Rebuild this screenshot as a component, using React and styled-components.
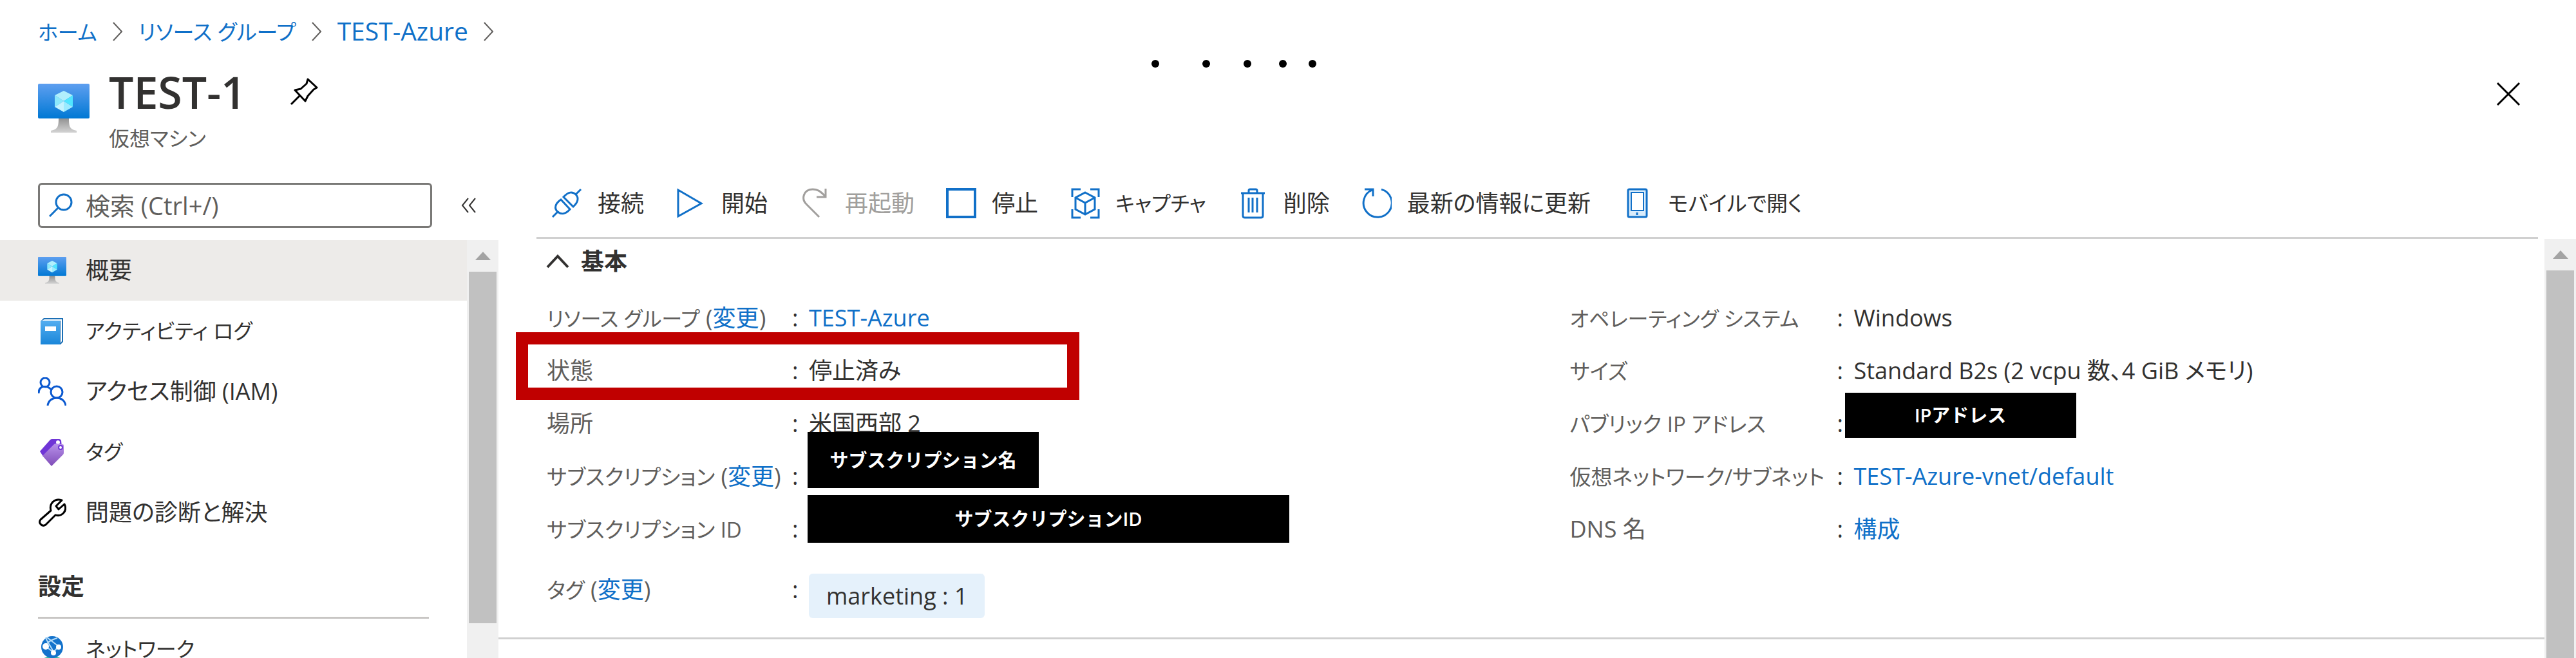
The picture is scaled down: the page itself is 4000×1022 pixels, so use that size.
import React from "react";
import styled, { createGlobalStyle, ThemeProvider } from "styled-components";

const theme = {
  link: "#0f70c8",
  icon: "#1170c8",
  text: "#323130",
  muted: "#605e5c",
  disabled: "#a19f9d",
  line: "#d0d0d0",
  hover: "#edebe9",
  size: { mask: 29, small: 32, kana: 33, body: 36, input: 38, large: 39, title: 68 },
};

const GlobalStyle = createGlobalStyle`
  * {
    box-sizing: border-box;
  }
  body {
    margin: 0;
    background: #fff;
    overflow: hidden;
    color: ${theme.text};
    font-family: "Open Sans", "Noto Sans CJK JP", sans-serif;
    font-size: ${theme.size.body}px;
    line-height: 50px;
    font-feature-settings: "palt";
  }
  button {
    padding: 0;
    border: 0;
    background: none;
    color: inherit;
    font: inherit;
    font-feature-settings: inherit;
    cursor: pointer;
  }
  svg {
    display: block;
    flex: none;
    fill: none;
  }
`;

const Page = styled.div`
  display: flex;
  flex-direction: column;
  height: 100vh;
  position: relative;
`;

const Link = styled.a`
  color: ${({ theme }) => theme.link};
  text-decoration: none;
`;

const Text = styled.span`
  font-size: ${({ theme, $size = "body" }) => theme.size[$size]}px;
  white-space: nowrap;
`;

/* ---------- header ---------- */

const Breadcrumb = styled.nav`
  display: flex;
  align-items: center;
  gap: 24px;
  height: 74px;
  padding: 24px 59px 0;
`;

const Header = styled.header`
  display: flex;
  align-items: center;
  gap: 30px;
  padding: 34px 86px 29px 59px;
`;

const TitleBlock = styled.div`
  flex: 1;
  display: flex;
  flex-direction: column;
  gap: 17px;
`;

const TitleRow = styled.div`
  display: flex;
  align-items: center;
  gap: 68px;
`;

const Title = styled.h1`
  margin: 0;
  font-size: ${({ theme }) => theme.size.title}px;
  font-weight: 600;
  line-height: 70px;
`;

const Subtitle = styled.div`
  color: ${({ theme }) => theme.muted};
  font-size: ${({ theme }) => theme.size.small}px;
  line-height: 40px;
`;

const CloseButton = styled.button`
  align-self: flex-start;
  height: 76px;
`;

const Progress = styled.div`
  position: absolute;
  top: 93px;
  left: 1788px;
`;

/* ---------- layout ---------- */

const Body = styled.div`
  flex: 1;
  min-height: 0;
  display: grid;
  grid-template-columns: 774px 1fr;
`;

const Column = styled.div`
  display: flex;
  flex-direction: column;
  min-width: 0;
  min-height: 0;
`;

const Scrollable = styled.div`
  flex: 1;
  min-height: 0;
  display: flex;
`;

const ScrollContent = styled.div`
  flex: 1;
  min-width: 0;
  overflow: hidden;
`;

const ScrollTrack = styled.div`
  width: 49px;
  display: flex;
  flex-direction: column;
  background: #f0f0f0;
`;

const ScrollArrow = styled.button`
  height: 49px;
  display: grid;
  place-items: center;
`;

const ScrollRail = styled.div`
  flex: 1;
  padding: 0 3px;
`;

const ScrollThumb = styled.div`
  height: ${({ $length }) => $length}%;
  background: #c1c1c1;
`;

/* ---------- sidebar ---------- */

const SearchRow = styled.div`
  display: flex;
  align-items: center;
  gap: 45px;
  height: 109px;
  padding-left: 59px;
`;

const SearchBox = styled.label`
  width: 612px;
  height: 70px;
  display: flex;
  align-items: center;
  gap: 20px;
  padding: 0 14px;
  border: 3px solid #7a7977;
  border-radius: 6px;
`;

const SearchInput = styled.input`
  flex: 1;
  min-width: 0;
  padding: 0;
  border: 0;
  outline: 0;
  background: none;
  color: ${({ theme }) => theme.text};
  font: inherit;
  font-feature-settings: inherit;
  font-size: ${({ theme }) => theme.size.input}px;

  &::placeholder {
    color: ${({ theme }) => theme.muted};
    opacity: 1;
  }
`;

const NavItem = styled.a`
  display: flex;
  align-items: center;
  gap: 30px;
  height: 94px;
  padding-left: 59px;
  color: inherit;
  text-decoration: none;
  background: ${({ theme, $active }) => ($active ? theme.hover : "transparent")};
`;

const NavHeading = styled.h2`
  margin: 0 59px;
  padding: 43px 0 22px;
  border-bottom: 3px solid #c8c6c4;
  font-size: ${({ theme }) => theme.size.body}px;
  font-weight: 600;
`;

/* ---------- main ---------- */

const Toolbar = styled.div`
  display: flex;
  align-items: center;
  gap: 48px;
  height: 107px;
  margin: 0 59px;
  padding-left: 23px;
  border-bottom: 3px solid ${({ theme }) => theme.line};
`;

const ToolButton = styled.button`
  display: flex;
  align-items: center;
  gap: 24px;
  color: ${({ theme }) => theme.text};

  svg {
    color: ${({ theme }) => theme.icon};
  }
  &:disabled,
  &:disabled svg {
    color: ${({ theme }) => theme.disabled};
  }
`;

const Essentials = styled.section`
  border-bottom: 3px solid ${({ theme }) => theme.line};
`;

const SectionToggle = styled.button`
  display: flex;
  align-items: center;
  gap: 18px;
  height: 70px;
  margin: 0 0 12px 74px;
  font-weight: 600;
`;

const Fields = styled.div`
  display: grid;
  grid-template-columns: 1fr 1fr;
`;

const FieldList = styled.dl`
  margin: 0;
  padding-left: 75px;
`;

const Field = styled.div`
  position: relative;
  display: grid;
  grid-template-columns: ${({ $wide }) => ($wide ? 415 : 381)}px 26px 1fr;
  align-items: ${({ $tall }) => ($tall ? "start" : "center")};
  min-height: 82px;
  padding: ${({ $tall }) => ($tall ? "28px 0 30px" : "0")};
`;

const Label = styled.dt`
  color: ${({ theme }) => theme.muted};
  white-space: nowrap;
`;

const Value = styled.dd`
  margin: 0;
  align-self: stretch;
  display: flex;
  align-items: center;
  position: relative;
  white-space: nowrap;
`;

const Chip = styled.span`
  height: 69px;
  padding: 0 27px;
  border-radius: 6px;
  background: #e5f1fb;
  line-height: 69px;
`;

const Mask = styled.span`
  position: absolute;
  top: ${({ $top }) => $top}px;
  left: ${({ $left = -2 }) => $left}px;
  width: ${({ $width }) => $width}px;
  height: ${({ $height }) => $height}px;
  display: grid;
  place-items: center;
  z-index: 1;
  background: #000;
  color: #fff;
  font-size: ${({ theme }) => theme.size.mask}px;
  font-weight: 600;
  font-feature-settings: normal;
`;

const Highlight = styled.span`
  position: absolute;
  top: -19px;
  left: -48px;
  width: 875px;
  height: 105px;
  border: 19px solid #c00000;
`;

/* ---------- icons ---------- */

const VmIcon = ({ id, width = 44, height = 42 }) => (
  <svg width={width} height={height} viewBox="0 0 80 76" preserveAspectRatio="xMidYMin meet">
    <defs>
      <linearGradient id={id + "s"} x1="0" y1="0" x2="0" y2="1">
        <stop offset="0" stopColor="#5e9ff0" />
        <stop offset="1" stopColor="#0078d4" />
      </linearGradient>
      <linearGradient id={id + "b"} x1="0" y1="0" x2="0" y2="1">
        <stop offset="0" stopColor="#8f8f8f" />
        <stop offset="1" stopColor="#d4d4d4" />
      </linearGradient>
    </defs>
    <path d="M32 53h16c0 13 1 18 12 20v3H20v-3c11-2 12-7 12-20z" fill={`url(#${id}b)`} />
    <rect width="80" height="54" rx="2" fill={`url(#${id}s)`} />
    <path d="M26 18 40 11l14 7-14 9z" fill="#b0effc" />
    <path d="M54 18v18l-14-9z" fill="#50e6ff" />
    <path d="M26 18v18l14-9z" fill="#8be8fb" />
    <path d="M26 36l14-9v17z" fill="#c3f3ff" />
    <path d="M54 36l-14-9v17z" fill="#9cebff" />
  </svg>
);

const BookIcon = () => (
  <svg width="44" height="44" viewBox="0 0 44 44">
    <defs>
      <linearGradient id="book" x1="0" y1="0" x2="0" y2="1">
        <stop offset="0" stopColor="#54aef0" />
        <stop offset="1" stopColor="#1a86d9" />
      </linearGradient>
    </defs>
    <path d="M4 7 9 2h30v37l-4 4H4z" fill="#1b6fb5" />
    <path d="M6 6 10 4h27v34l-2 3V6z" fill="#fff" />
    <path d="M4 6h30v37H4z" fill="url(#book)" />
    <path d="M11 15h17v7H11z" fill="#fff" />
  </svg>
);

const PeopleIcon = () => (
  <svg width="44" height="44" viewBox="0 0 44 44" stroke="#0b59d0" strokeWidth="3">
    <circle cx="11" cy="8" r="7" />
    <circle cx="29" cy="23" r="9" />
    <path d="M1 25c0-14 15-12 19-6M15 44c2-16 26-16 28 0" />
  </svg>
);

const TagIcon = () => (
  <svg width="44" height="44" viewBox="0 0 44 44">
    <defs>
      <linearGradient id="tag" x1="0" y1="0" x2="0" y2="1">
        <stop offset="0" stopColor="#b892ea" />
        <stop offset="1" stopColor="#7f4cb8" />
      </linearGradient>
    </defs>
    <path d="M3 21 19 3q1-1 3-1h11q2 0 3 2l1 10L8 29z" fill="#6f35d6" />
    <circle cx="31" cy="7" r="3" fill="#fff" />
    <path d="M7 28 25 10q1-1 3-1l10 1q2 0 2 2v11q0 2-1 3L21 44z" fill="url(#tag)" />
    <circle cx="35" cy="15" r="3" fill="#fff" stroke="#6f35d6" strokeWidth="2" />
  </svg>
);

const WrenchIcon = () => (
  <svg width="44" height="44" viewBox="0 0 44 44" stroke="#000" strokeWidth="3" strokeLinejoin="round">
    <path d="M4 33 20 19C17 8 26-1 37 3l-9 9 4 5 9-8c5 10-3 20-14 17L12 41c-6 4-12-3-8-8z" />
  </svg>
);

const GlobeIcon = () => (
  <svg width="44" height="44" viewBox="0 0 44 44">
    <path d="M2 44c3-14 37-14 40 0z" fill="#35b9a0" />
    <circle cx="22" cy="19" r="17" fill="#1473cc" />
    <g stroke="#b5dcf8" strokeWidth="2">
      <path d="M14 4 32 18M30 5C20 8 13 12 12 18l12 9 8-9M12 4c2 8 9 14 12 23" />
    </g>
    <g fill="#fff">
      <circle cx="12" cy="18" r="5" />
      <circle cx="32" cy="19" r="4" />
      <circle cx="24" cy="28" r="4" />
    </g>
  </svg>
);

const ToolIcon = ({ children, strokeWidth = 3 }) => (
  <svg width="48" height="48" viewBox="0 0 48 48" stroke="currentColor" strokeWidth={strokeWidth}>
    {children}
  </svg>
);

const icons = {
  connect: (
    <ToolIcon>
      <path d="M2 45l9-9M38 10l8-8" />
      <path d="M15 18 29 33c-6 7-13 9-19 4s-4-13 5-19z" />
      <path d="M19 14 34 29c8-7 9-14 4-19s-12-4-19 4z" />
    </ToolIcon>
  ),
  start: (
    <ToolIcon>
      <path d="M5 3v41l36-20z" />
    </ToolIcon>
  ),
  restart: (
    <ToolIcon>
      <path d="M32 45 13 26C3 17 8 2 22 2c9 0 12 4 20 11M42 1v13H28" />
    </ToolIcon>
  ),
  stop: (
    <ToolIcon strokeWidth={4}>
      <rect x="3" y="2" width="43" height="43" />
    </ToolIcon>
  ),
  capture: (
    <ToolIcon>
      <path d="M18 2H5v12M33 2h13v12M18 46H5V33M33 46h13V33" />
      <path d="M25 7l15 8v18l-15 8-15-8V15zM10 15l15 8 15-8M25 23v18" />
    </ToolIcon>
  ),
  trash: (
    <ToolIcon>
      <path d="M6 8h37M18 8V4q0-2 2-2h9q2 0 2 2v4M9 8v35q0 3 3 3h25q3 0 3-3V8M18 15v23M24 15v23M31 15v23" />
    </ToolIcon>
  ),
  refresh: (
    <ToolIcon>
      <path d="M32 2.1A22 22 0 1 1 18 2.9M6 2h13v11" />
    </ToolIcon>
  ),
  mobile: (
    <ToolIcon>
      <rect x="10" y="2" width="29" height="43" rx="2" fill="#d9ecfb" />
      <rect x="15" y="7" width="19" height="28" fill="#fff" strokeWidth="2" />
      <path d="M24 38v4" />
    </ToolIcon>
  ),
};

const PinIcon = () => (
  <svg width="44" height="44" viewBox="0 0 44 44" stroke="#000" strokeWidth="3" strokeLinejoin="round">
    <path d="M2 41 15 28M28 2l14 13-5 3-9 10-4 8L8 19l9-2 9-8z" />
  </svg>
);

const BreadcrumbChevron = () => (
  <svg width="16" height="30" viewBox="0 0 16 30" stroke="#605e5c" strokeWidth="2">
    <path d="M1 1l13 14L1 29" />
  </svg>
);

const SearchIcon = () => (
  <svg width="37" height="37" viewBox="0 0 37 37" stroke={theme.icon} strokeWidth="3">
    <circle cx="23" cy="14" r="12" />
    <path d="M1 36l14-14" />
  </svg>
);

/* ---------- data ---------- */

const navItems = [
  { label: "概要", icon: <VmIcon id="nav" />, active: true },
  { label: "アクティビティ ログ", icon: <BookIcon />, size: "small" },
  { label: "アクセス制御 (IAM)", icon: <PeopleIcon /> },
  { label: "タグ", icon: <TagIcon />, size: "small" },
  { label: "問題の診断と解決", icon: <WrenchIcon /> },
];

const tools = [
  { label: "接続", icon: "connect" },
  { label: "開始", icon: "start" },
  { label: "再起動", icon: "restart", disabled: true },
  { label: "停止", icon: "stop" },
  { label: "キャプチャ", icon: "capture", size: "small" },
  { label: "削除", icon: "trash" },
  { label: "最新の情報に更新", icon: "refresh" },
  { label: "モバイルで開く", icon: "mobile", size: "kana" },
];

const leftFields = [
  { label: "リソース グループ", size: "small", change: true, value: <Link href="#group">TEST-Azure</Link> },
  { label: "状態", value: "停止済み", highlight: true },
  { label: "場所", value: "米国西部 2" },
  {
    label: "サブスクリプション",
    size: "kana",
    change: true,
    value: <Mask $top={-28} $width={359} $height={87}>サブスクリプション名</Mask>,
  },
  {
    label: "サブスクリプション ID",
    size: "kana",
    value: <Mask $top={-12} $width={748} $height={74}>サブスクリプションID</Mask>,
  },
  { label: "タグ", size: "kana", change: true, tall: true, value: <Chip>marketing : 1</Chip> },
];

const rightFields = [
  { label: "オペレーティング システム", size: "small", value: "Windows" },
  { label: "サイズ", size: "kana", value: "Standard B2s (2 vcpu 数、4 GiB メモリ)" },
  {
    label: "パブリック IP アドレス",
    size: "kana",
    value: <Mask $top={-7} $left={-14} $width={359} $height={70}>IPアドレス</Mask>,
  },
  { label: "仮想ネットワーク/サブネット", size: "kana", value: <Link href="#vnet">TEST-Azure-vnet/default</Link> },
  { label: "DNS 名", value: <Link href="#dns">構成</Link> },
];

const renderFields = (fields, wide) =>
  fields.map(({ label, size, change, value, highlight, tall }) => (
    <Field key={label} $wide={wide} $tall={tall}>
      <Label>
        <Text $size={size}>{label}</Text>
        {change && (
          <>
            {" "}(<Link href="#change">変更</Link>)
          </>
        )}
      </Label>
      <span aria-hidden="true">:</span>
      <Value>{value}</Value>
      {highlight && <Highlight />}
    </Field>
  ));

const Scrollbar = ({ length }) => (
  <ScrollTrack>
    <ScrollArrow aria-label="上へスクロール">
      <svg width="24" height="13" viewBox="0 0 24 13">
        <path d="M0 13 12 0l12 13z" fill="#a3a3a3" />
      </svg>
    </ScrollArrow>
    <ScrollRail>
      <ScrollThumb $length={length} />
    </ScrollRail>
  </ScrollTrack>
);

export default function App() {
  return (
    <ThemeProvider theme={theme}>
      <GlobalStyle />
      <Page>
        <Breadcrumb>
          <Link href="#home"><Text $size="small">ホーム</Text></Link>
          <BreadcrumbChevron />
          <Link href="#groups"><Text $size="kana">リソース グループ</Text></Link>
          <BreadcrumbChevron />
          <Link href="#group"><Text $size="large">TEST-Azure</Text></Link>
          <BreadcrumbChevron />
        </Breadcrumb>

        <Header>
          <VmIcon id="head" width={80} height={84} />
          <TitleBlock>
            <TitleRow>
              <Title>TEST-1</Title>
              <button aria-label="ピン留め"><PinIcon /></button>
            </TitleRow>
            <Subtitle>仮想マシン</Subtitle>
          </TitleBlock>
          <CloseButton aria-label="閉じる">
            <svg width="38" height="38" viewBox="0 0 38 38" stroke="#000" strokeWidth="3">
              <path d="M2 2l34 34M36 2 2 36" />
            </svg>
          </CloseButton>
        </Header>

        <Progress role="progressbar">
          <svg width="256" height="12" viewBox="0 0 256 12">
            {[6, 85, 149, 204, 250].map((x) => (
              <circle key={x} cx={x} cy="6" r="6" fill="#000" />
            ))}
          </svg>
        </Progress>

        <Body>
          <Column>
            <SearchRow>
              <SearchBox>
                <SearchIcon />
                <SearchInput type="text" placeholder="検索 (Ctrl+/)" aria-label="検索" />
              </SearchBox>
              <button aria-label="折りたたむ">
                <svg width="24" height="24" viewBox="0 0 24 24" stroke="#323130" strokeWidth="2">
                  <path d="M11 1 2 12l9 11M22 1l-9 11 9 11" />
                </svg>
              </button>
            </SearchRow>
            <Scrollable>
              <ScrollContent as="nav">
                {navItems.map(({ label, icon, active, size }) => (
                  <NavItem key={label} href="#nav" $active={active}>
                    {icon}
                    <Text $size={size}>{label}</Text>
                  </NavItem>
                ))}
                <NavHeading>設定</NavHeading>
                <NavItem href="#network">
                  <GlobeIcon />
                  <Text $size="small">ネットワーク</Text>
                </NavItem>
              </ScrollContent>
              <Scrollbar length={91} />
            </Scrollable>
          </Column>

          <Column as="main">
            <Toolbar>
              {tools.map(({ label, icon, disabled, size }) => (
                <ToolButton key={label} disabled={disabled}>
                  {icons[icon]}
                  <Text $size={size}>{label}</Text>
                </ToolButton>
              ))}
            </Toolbar>
            <Scrollable>
              <ScrollContent>
                <Essentials>
                  <SectionToggle>
                    <svg width="36" height="22" viewBox="0 0 36 22" stroke="#323130" strokeWidth="4">
                      <path d="M2 20 18 3l16 17" />
                    </svg>
                    基本
                  </SectionToggle>
                  <Fields>
                    <FieldList>{renderFields(leftFields)}</FieldList>
                    <FieldList>{renderFields(rightFields, true)}</FieldList>
                  </Fields>
                </Essentials>
              </ScrollContent>
              <Scrollbar length={100} />
            </Scrollable>
          </Column>
        </Body>
      </Page>
    </ThemeProvider>
  );
}
